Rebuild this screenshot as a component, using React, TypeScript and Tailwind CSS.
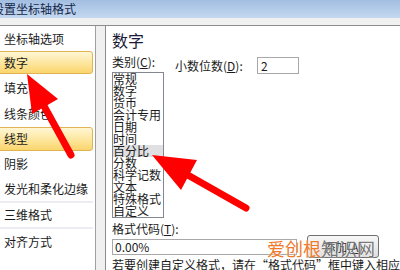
const navItems = [
  { label: "坐标轴选项", h: "h-[24px]" },
  { label: "数字", h: "h-[23px]", active: true },
  { label: "填充", h: "h-[27px]" },
  { label: "线条颜色", h: "h-[26px]" },
  { label: "线型", h: "h-[24px]", active: true },
  { label: "阴影", h: "h-[25px]" },
  { label: "发光和柔化边缘", h: "h-[25px]" },
  { sep: true },
  { label: "三维格式", h: "h-[24px]" },
  { sep: true },
  { label: "对齐方式", h: "h-[25px]" },
];

const categories = [
  "常规",
  "数字",
  "货币",
  "会计专用",
  "日期",
  "时间",
  "百分比",
  "分数",
  "科学记数",
  "文本",
  "特殊格式",
  "自定义",
];

function Arrows() {
  return (
    <svg className="absolute inset-0 pointer-events-none" width="400" height="270" viewBox="0 0 400 270">
      {/* arrow to 数字 */}
      <line x1="71" y1="155" x2="44" y2="106" stroke="#ff0000" strokeWidth="7" strokeLinecap="round" />
      <polygon points="27,74 58,99 32,114" fill="#ff0000" />
      {/* arrow to 百分比 */}
      <line x1="246" y1="208" x2="186" y2="174" stroke="#ff0000" strokeWidth="7" strokeLinecap="round" />
      <polygon points="152,155 197,160 181,190" fill="#ff0000" />
    </svg>
  );
}

export default function App() {
  return (
    <div className="relative w-[400px] h-[270px] overflow-hidden bg-[#f0f0f0] font-['Noto_Sans_CJK_SC','Liberation_Sans',sans-serif] text-[#1b1b1b]">
      {/* Title bar */}
      <div className="h-[18px] bg-gradient-to-b from-[#a2bee1] to-[#c4d9f0] flex items-center overflow-hidden">
        <span className="-ml-[8px] text-[12px] leading-[18px] text-[#15264a] whitespace-nowrap">设置坐标轴格式</span>
      </div>
      <div className="h-[7px] bg-[#f0f0f0]" />
      <div className="h-px bg-[#8c8c8c]" />

      <div className="flex h-[244px]">
        {/* Left nav */}
        <aside className="w-[96px] shrink-0 bg-white border-r border-[#a0a0a0] pt-[1px]">
          {navItems.map((item, i) =>
            item.sep ? (
              <div key={i} className="h-[2px] mr-[2px] bg-[#ececf1]" />
            ) : item.active ? (
              <div
                key={i}
                className={`${item.h} -ml-[3px] mr-[2px] rounded-[3px] border border-[#e0b452] bg-gradient-to-b from-[#fff6d4] via-[#fde7a0] to-[#fbd56c] pl-[6px] flex items-center text-[12px] whitespace-nowrap`}
              >
                {item.label}
              </div>
            ) : (
              <div key={i} className={`${item.h} pl-[4px] flex items-center text-[12px] whitespace-nowrap`}>
                {item.label}
              </div>
            )
          )}
        </aside>

        {/* Right content */}
        <main className="ml-[9px] flex-1 bg-white border-l border-[#8c8c8c] pl-[6px] overflow-hidden">
          <div className="pt-[6px] text-[16px] leading-[16px] text-[#1a1a3a]">数字</div>

          <div className="mt-[7px] flex items-start">
            <div className="w-[52px] shrink-0">
              <div className="h-[17px] text-[12px] leading-[14px] whitespace-nowrap">
                类别(<span className="underline">C</span>):
              </div>
              <div className="w-[52px] h-[146px] border border-[#828790] bg-white overflow-hidden">
                {categories.map((c) => (
                  <div
                    key={c}
                    className={`h-[12px] text-[12px] leading-[12px] whitespace-nowrap ${c === "百分比" ? "bg-[#e0e0e3]" : ""}`}
                  >
                    {c}
                  </div>
                ))}
              </div>
            </div>

            <div className="ml-[11px] mt-[2px] flex items-center h-[17px]">
              <span className="w-[82px] text-[12px] leading-[14px] whitespace-nowrap">
                小数位数(<span className="underline">D</span>):
              </span>
              <div className="w-[42px] h-[17px] border border-[#a8a8a8] pl-[3px] text-[12px] leading-[15px]">2</div>
            </div>
          </div>

          <div className="mt-[4px] h-[13px] text-[12px] leading-[13px] whitespace-nowrap">
            格式代码(<span className="underline">T</span>):
          </div>
          <div className="flex items-center h-[23px]">
            <div className="w-[185px] h-[16px] border border-[#a8a8a8] pl-[2px] text-[12px] leading-[14px]">0.00%</div>
            <button
              type="button"
              className="ml-[10px] w-[72px] h-[23px] rounded-[3px] border border-[#707070] bg-gradient-to-b from-[#f7f7f7] to-[#dedede] text-[12px] leading-[21px]"
            >
              添加(<span className="underline">A</span>)
            </button>
          </div>
          <div className="text-[12px] leading-[13px] whitespace-nowrap">
            若要创建自定义格式，请在“格式代码”框中键入相应的数字格式代码。
          </div>
        </main>
      </div>

      <Arrows />

      {/* Watermark */}
      <div className="absolute left-[267px] top-[239px] text-[18px] leading-[18px] whitespace-nowrap [text-shadow:0_0_2px_#ffffff]">
        <span className="text-[#ee7a2a]">爱创根</span>
        <span className="text-[#555555]/80">知识网</span>
      </div>
    </div>
  );
}
